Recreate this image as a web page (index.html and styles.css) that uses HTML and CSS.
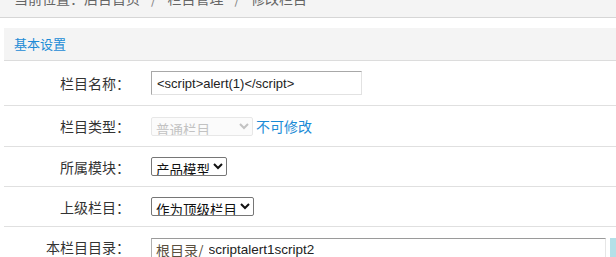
FILE: index.html
```html
<!DOCTYPE html>
<html lang="zh-CN">
<head>
    <meta charset="UTF-8">
    <meta name="viewport" content="width=device-width, initial-scale=1.0">
    <title>修改栏目</title>
    <link rel="stylesheet" href="styles.css">
</head>
<body>
    <div class="crumb">
        当前位置：<a href="#">后台首页</a><span class="sep">/</span><a href="#">栏目管理</a><span class="sep">/</span>修改栏目
    </div>

    <div class="main">
        <div class="box-title">基本设置</div>
        <form class="edit-form">
            <div class="row row-first">
                <label class="lbl" for="typename">栏目名称：</label>
                <div class="field">
                    <input type="text" id="typename" class="txt" value="<script>alert(1)</script>">
                </div>
            </div>
            <div class="row row-second">
                <label class="lbl">栏目类型：</label>
                <div class="field">
                    <select class="sel" disabled>
                        <option>普通栏目</option>
                    </select>
                    <span class="note">不可修改</span>
                </div>
            </div>
            <div class="row">
                <label class="lbl">所属模块：</label>
                <div class="field">
                    <select class="sel">
                        <option>产品模型</option>
                    </select>
                </div>
            </div>
            <div class="row">
                <label class="lbl">上级栏目：</label>
                <div class="field">
                    <select class="sel">
                        <option>作为顶级栏目</option>
                    </select>
                </div>
            </div>
            <div class="row row-last">
                <label class="lbl">本栏目目录：</label>
                <div class="field">
                    <div class="dir-box">
                        <span class="dir-prefix">根目录/</span>
                        <input type="text" class="dir-input" value="scriptalert1script2">
                    </div>
                    <button type="button" class="btn-check"></button>
                </div>
            </div>
        </form>
    </div>
</body>
</html>
```

FILE: styles.css
```css
body {
    margin: 0;
    padding: 0;
    font-family: "Microsoft YaHei", "Noto Sans CJK SC", sans-serif;
    font-size: 14px;
    color: #333;
    background: #fff;
    overflow: hidden;
}

a {
    color: #666;
    text-decoration: none;
}

.crumb {
    margin-top: -20px;
    height: 37px;
    line-height: 37px;
    padding-left: 14px;
    background: #f4f4f4;
    border-bottom: 1px solid #d6d6d6;
    color: #666;
    white-space: nowrap;
}

.sep {
    padding: 0 11px;
    color: #888;
}

.main {
    padding: 10px 0 0 4px;
}

.box-title {
    height: 32px;
    line-height: 32px;
    padding-left: 10px;
    font-size: 13px;
    color: #1b8bd6;
    background: #f4f4f4;
    border-bottom: 1px solid #dcdcdc;
}

.row {
    display: flex;
    align-items: center;
    height: 39px;
    border-bottom: 1px solid #e0e0e0;
}

.row-first {
    height: 44px;
}

.row-second {
    height: 40px;
}

.row-last {
    border-bottom: none;
    align-items: flex-start;
    padding-top: 10px;
}

.lbl {
    width: 126px;
    text-align: right;
    flex-shrink: 0;
    color: #333;
}

.row-last .lbl {
    line-height: 20px;
}

.field {
    display: flex;
    align-items: center;
    margin-left: 21px;
    flex: 1;
}

.txt {
    box-sizing: border-box;
    width: 211px;
    height: 24px;
    padding: 0 5px;
    border: 1px solid #e2e2e2;
    border-top-color: #a8a8a8;
    border-left-color: #a8a8a8;
    font-family: "Liberation Sans", Arial, sans-serif;
    font-size: 13px;
    color: #222;
    outline: none;
}

.sel {
    height: 19px;
    padding: 0;
    font-family: "Microsoft YaHei", "Noto Sans CJK SC", sans-serif;
    font-size: 13.5px;
    color: #111;
    border: 1px solid #767676;
    border-radius: 2px;
    background: #fff;
}

.sel[disabled] {
    width: 102px;
    color: #a9a9a9;
    background: #fafafa;
    border-color: #dedede;
}

.note {
    margin-left: 3px;
    color: #1b8bd6;
}

.dir-box {
    box-sizing: border-box;
    display: flex;
    align-items: flex-start;
    width: 455px;
    height: 28px;
    padding: 1px 0 0 4px;
    line-height: 20px;
    border: 1px solid #e6e6e6;
    border-top-color: #9a9a9a;
    border-left-color: #b0b0b0;
}

.dir-prefix {
    color: #5a5040;
}

.dir-input {
    flex: 1;
    height: 20px;
    border: none;
    padding: 0 0 0 5px;
    font-family: "Liberation Sans", Arial, sans-serif;
    font-size: 13.5px;
    color: #222;
    outline: none;
    background: transparent;
}

.btn-check {
    width: 40px;
    height: 28px;
    margin: 1px 0 0 4px;
    border: none;
    background: #b3e0e8;
}
```
